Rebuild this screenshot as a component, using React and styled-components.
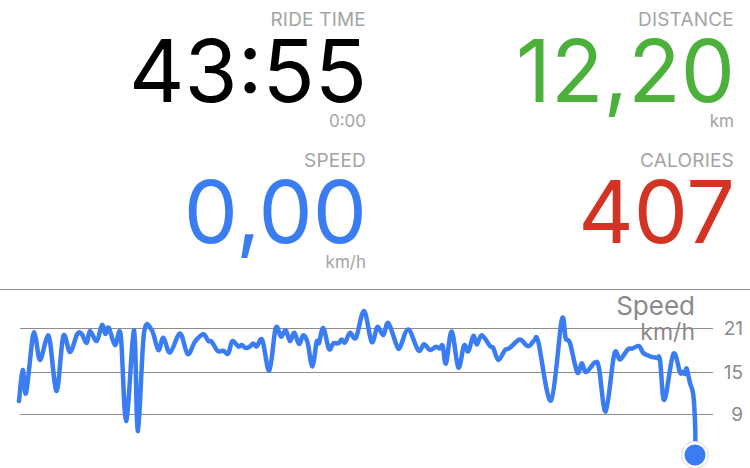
import React from 'react';
import styled, { createGlobalStyle } from 'styled-components';

const GlobalStyle = createGlobalStyle`
	html, body {
		margin: 0;
		padding: 0;
		background: #fff;
		overflow: hidden;
	}
	body {
		font-family: Inter, "Liberation Sans", sans-serif;
		-webkit-font-smoothing: antialiased;
	}
`

const Screen = styled.div`
	width: 750px;
	height: 468px;
	background: #fff;
	display: flex;
	flex-direction: column;
`

const StatsGrid = styled.div`
	height: 289px;
	box-sizing: border-box;
	display: grid;
	grid-template-columns: 1fr 1fr;
	grid-template-rows: 141px 1fr;
	column-gap: 2px;
	padding: 12px 16px 0 0;
`

const Stat = styled.div`
	display: flex;
	flex-direction: column;
	align-items: flex-end;
`

const Label = styled.div`
	font-size: 19px;
	line-height: 16px;
	color: #a4a4a4;
	letter-spacing: 0.2px;
`

const Value = styled.div`
	font-size: 86px;
	line-height: 66px;
	margin-top: 10px;
	margin-right: -1px;
	letter-spacing: 0;
	color: ${p => p.color};
`

const Unit = styled.div`
	font-size: 17px;
	line-height: 14px;
	margin-top: 10px;
	color: #a4a4a4;
	min-height: 14px;
`

const ChartArea = styled.div`
	flex: 1;
	border-top: 1px solid #8e8e8e;
`

const ChartSvg = styled.svg`
	display: block;
	width: 750px;
	height: 178px;
	font-family: Inter, "Liberation Sans", sans-serif;
`

const stats = [
	{ label: 'RIDE TIME', value: '43:55', unit: '0:00', color: '#000' },
	{ label: 'DISTANCE', value: '12,20', unit: 'km', color: '#4cb13b' },
	{ label: 'SPEED', value: '0,00', unit: 'km/h', color: '#3a7cf1' },
	{ label: 'CALORIES', value: '407', unit: '', color: '#d33322' },
]

// speed samples, traced in page coordinates
const points = [
	[19,401],[22.7,370],[26,393],[32.7,337],[35.7,338],[40,360],[46.7,338],[50,341.7],[56.7,391],
	[63.3,336],[70,352],[77.3,334],[81.7,334],[86.7,343],[90,331],[96.7,341],[102,325],[105.3,334],
	[108.7,327.7],[115,345],[120.7,335],[126,421],[132.7,340],[135,341.7],[138,431],[144,333],
	[151.7,330],[158.3,350],[163.3,337.7],[170,352.5],[180,333.5],[187.7,354],[195,341.7],[203.3,334.3],
	[208.3,341],[211.7,341.7],[217.7,351],[223.3,350.7],[228.3,353.5],[232.3,341],[238.3,346.5],
	[241.7,345],[245.7,348],[250,346.5],[253.3,343.5],[256.7,346.5],[262.3,340],[269.3,370.5],
	[275.7,328],[281,336.7],[285.7,330.3],[290,341],[294.3,332.7],[299,344],[303.3,335.3],[307.7,343],
	[312.3,366.5],[316.7,341.7],[319,343],[323.3,328],[329,349],[333.3,343.3],[338.3,343.3],[341.7,339.5],
	[345,342.5],[350,332.7],[356,337.7],[364,311],[371.7,342],[377.3,327],[383.3,335],[388.3,323],
	[396.7,345.5],[400,347.3],[408.3,329.5],[418.3,350.5],[424,344.3],[430,350],[436,346.7],[440,348.5],
	[442.7,345.7],[446,363.5],[451.7,331.5],[458.3,367.5],[464,345.5],[468.3,351.3],[473.3,336],
	[476.7,344.5],[481.7,335.3],[490,346],[493.3,348],[498.3,360],[505,350],[509.3,348.3],[518.3,340],
	[521.7,340.3],[528.3,346.3],[534.3,340.5],[538.3,342],[551,400.5],[561.7,320],[565.7,338.3],
	[570,343.3],[577.3,372.5],[581.7,363.3],[586,372],[595,362.5],[599,368],[605.7,411.5],[614.3,354],
	[620,359.5],[627.7,349.5],[632.3,348.5],[639,346],[643.3,353],[650,356.3],[656.7,358],[660,360],
	[664.3,400],[673.3,354],[680,372.5],[682.3,371.7],[685,374],[686.7,368.5],[690,383],[693.3,395],
	[695.3,430],[695,455],
]

const TOP = 290

const smoothPath = (pts) => {
	const p = pts.map(([x, y]) => [x, y - TOP])
	let d = `M${p[0][0]},${p[0][1]}`
	for (let i = 0; i < p.length - 1; i++) {
		const p0 = p[i - 1] || p[i]
		const p1 = p[i]
		const p2 = p[i + 1]
		const p3 = p[i + 2] || p2
		const c1x = p1[0] + (p2[0] - p0[0]) / 6
		const c1y = p1[1] + (p2[1] - p0[1]) / 6
		const c2x = p2[0] - (p3[0] - p1[0]) / 6
		const c2y = p2[1] - (p3[1] - p1[1]) / 6
		d += ` C${c1x.toFixed(1)},${c1y.toFixed(1)} ${c2x.toFixed(1)},${c2y.toFixed(1)} ${p2[0]},${p2[1]}`
	}
	return d
}

const gridLines = [
	{ y: 328, label: '21' },
	{ y: 372, label: '15' },
	{ y: 414, label: '9' },
]

const SpeedChart = () => (
	<ChartSvg viewBox="0 0 750 178">
		{gridLines.map(g => (
			<g key={g.label}>
				<line x1="20" x2="713" y1={g.y - TOP + 0.5} y2={g.y - TOP + 0.5} stroke="#8c8c8c" strokeWidth="1" />
				<text x="743" y={g.y - TOP + 7} textAnchor="end" fontSize="19" fill="#8a8a8a">{g.label}</text>
			</g>
		))}
		<text x="695" y={315 - TOP} textAnchor="end" fontSize="26" fill="#8a8a8a">Speed</text>
		<text x="695" y={340 - TOP} textAnchor="end" fontSize="23" fill="#8a8a8a">km/h</text>
		<path d={smoothPath(points)} fill="none" stroke="#3a7cf1" strokeWidth="4.5" strokeLinejoin="round" strokeLinecap="round" />
		<circle cx="695" cy={455 - TOP} r="13.5" fill="#fff" stroke="#d8d8d8" strokeWidth="1" />
		<circle cx="695" cy={455 - TOP} r="10.5" fill="#3a7cf1" />
	</ChartSvg>
)

const App = () => {
	return (
		<Screen>
			<GlobalStyle />
			<StatsGrid>
				{stats.map(s => (
					<Stat key={s.label}>
						<Label>{s.label}</Label>
						<Value color={s.color}>{s.value}</Value>
						<Unit>{s.unit}</Unit>
					</Stat>
				))}
			</StatsGrid>
			<ChartArea>
				<SpeedChart />
			</ChartArea>
		</Screen>
	);
};

export default App;
